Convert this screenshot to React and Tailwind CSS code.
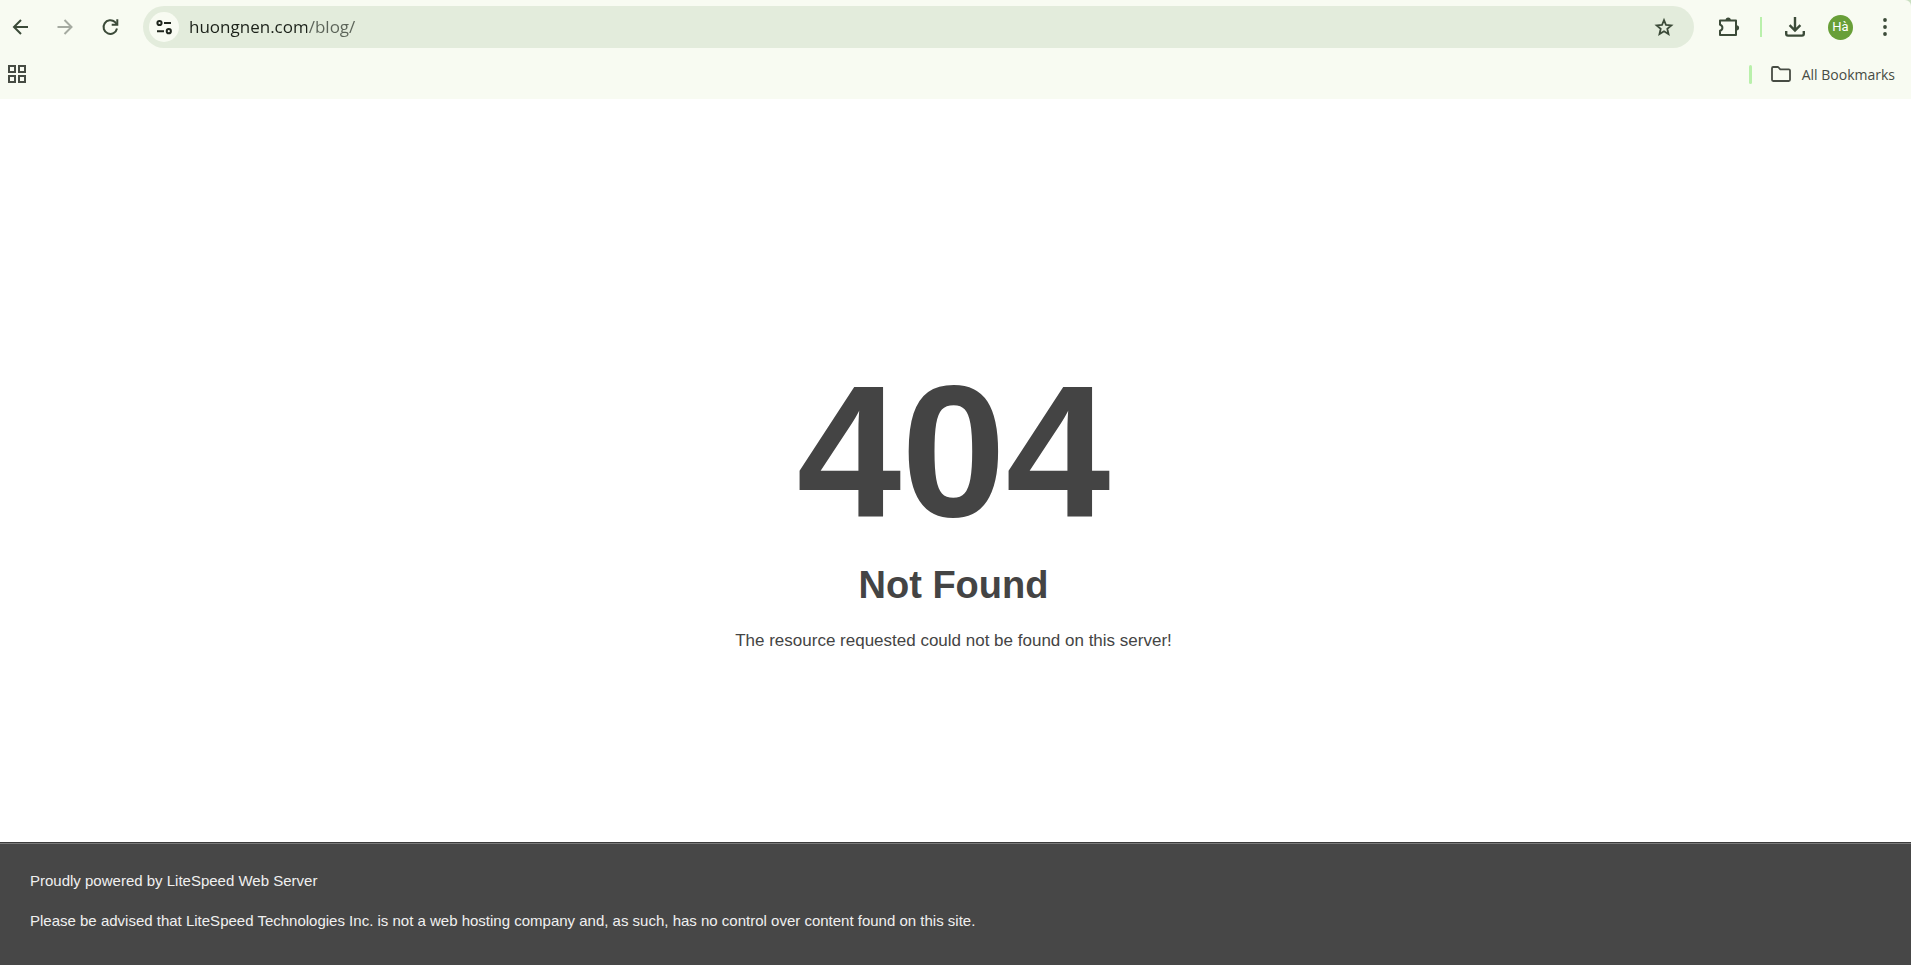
import React from "react";

const iconProps = {
  viewBox: "0 0 20 20",
  fill: "none",
  stroke: "currentColor",
  strokeWidth: 2,
  "aria-hidden": true,
};

const BackIcon = () => (
  <svg {...iconProps} className="size-5">
    <path d="M18 10H4M11 3l-7 7 7 7" />
  </svg>
);

const ForwardIcon = () => (
  <svg {...iconProps} className="size-5">
    <path d="M2.5 10h14M9.5 3l7 7-7 7" />
  </svg>
);

const ReloadIcon = () => (
  <svg {...iconProps} className="size-5">
    <path d="M17 11.5A6.8 6.8 0 1 1 15 5.1l2 2.2" />
    <path d="M17.3 2.2v5.6h-5.6" />
  </svg>
);

const SiteSettingsIcon = () => (
  <svg {...iconProps} className="size-5">
    <circle cx="5.5" cy="6" r="2.1" />
    <path d="M10 6h7M3 14.2h7" />
    <circle cx="14.8" cy="14.2" r="2.1" />
  </svg>
);

const StarIcon = () => (
  <svg {...iconProps} strokeWidth={1.8} className="size-5">
    <path d="M10 3.2l2 4.8 5.3.4-4 3.4 1.2 5.2-4.5-2.8L5.5 17l1.2-5.2-4-3.4L8 8z" />
  </svg>
);

const ExtensionsIcon = () => (
  <svg viewBox="0 0 22 22" fill="none" stroke="currentColor" strokeWidth={2} strokeLinejoin="round" className="size-[22px]" aria-hidden="true">
    <path d="M2 4.5h16V19H2v-4.2c3.2-.9 3.2-5.2 0-6.1z" />
    <path d="M7.6 4a2.6 2.6 0 0 1 5.2 0zM18.5 9.2a2.6 2.6 0 0 1 0 5.2z" fill="currentColor" stroke="none" />
  </svg>
);

const DownloadIcon = () => (
  <svg viewBox="0 0 22 22" fill="none" stroke="currentColor" strokeWidth={2.4} className="size-[22px]" aria-hidden="true">
    <path d="M11 1v13.5M5.6 9.2l5.4 5.4 5.4-5.4M2.2 15v2.8q0 1.8 1.8 1.8h14q1.8 0 1.8-1.8V15" />
  </svg>
);

const MenuIcon = () => (
  <svg viewBox="0 0 20 20" fill="currentColor" className="size-5" aria-hidden="true">
    <circle cx="10" cy="3" r="1.9" />
    <circle cx="10" cy="10" r="1.9" />
    <circle cx="10" cy="17" r="1.9" />
  </svg>
);

const AppsIcon = () => (
  <svg viewBox="0 0 18 18" fill="none" stroke="currentColor" strokeWidth={2} className="size-[18px]" aria-hidden="true">
    <path d="M1 1h6v6H1zM11 1h6v6h-6zM1 11h6v6H1zM11 11h6v6h-6z" />
  </svg>
);

const FolderIcon = () => (
  <svg viewBox="0 0 22 18" fill="none" stroke="currentColor" strokeWidth={1.8} strokeLinejoin="round" className="h-[18px] w-[22px]" aria-hidden="true">
    <path d="M2 3.2Q2 2 3.2 2h4.9l2.2 2.3h8.5q1.2 0 1.2 1.2v9.3q0 1.2-1.2 1.2H3.2Q2 16 2 14.8z" />
  </svg>
);

const Toolbar = () => (
  <div className="flex h-[54px] items-center pr-4 pl-[10px] text-[#3c4b39]">
    <div className="flex items-center gap-[25px]">
      <button aria-label="Back">
        <BackIcon />
      </button>
      <button aria-label="Forward" disabled className="text-[#a5aaa1]">
        <ForwardIcon />
      </button>
      <button aria-label="Reload">
        <ReloadIcon />
      </button>
    </div>

    <div className="ml-[23px] flex h-[42px] flex-1 items-center rounded-full bg-[#e3ecdc] pr-5 pl-[6px]">
      <button
        aria-label="View site information"
        className="flex size-[30px] items-center justify-center rounded-full bg-[#f8fbf2] text-[#20271e]"
      >
        <SiteSettingsIcon />
      </button>
      {/* domain is darker than the path that follows it */}
      <input
        type="text"
        aria-label="Address"
        defaultValue="huongnen.com/blog/"
        className="ml-[10px] flex-1 bg-linear-to-r from-[#1b2119] from-[118px] to-[#5c6459] to-[118px] bg-clip-text font-['Open_Sans',sans-serif] text-[17px] text-transparent outline-none"
      />
      <button aria-label="Bookmark this tab">
        <StarIcon />
      </button>
    </div>

    <div className="ml-6 flex items-center">
      <button aria-label="Extensions">
        <ExtensionsIcon />
      </button>
      <span className="ml-5 h-5 w-[2px] bg-[#b9f0ab]" />
      <button aria-label="Downloads" className="ml-[22px]">
        <DownloadIcon />
      </button>
      <button
        aria-label="Profile"
        className="ml-[22px] flex size-[25px] items-center justify-center rounded-full bg-[#689f38] font-[Roboto,sans-serif] text-[13px] text-white"
      >
        Hà
      </button>
      <button aria-label="Menu" className="ml-[22px]">
        <MenuIcon />
      </button>
    </div>
  </div>
);

const BookmarksBar = () => (
  <div className="flex h-[45px] items-start justify-between pr-4 pl-2 text-[#474c44]">
    <button aria-label="Apps" className="mt-[11px]">
      <AppsIcon />
    </button>
    <div className="mt-[10px] flex h-5 items-center">
      <span className="h-[19px] w-[3px] rounded-full bg-[#b9f0ab]" />
      <button className="ml-[18px] flex items-center gap-[10px] font-['Open_Sans',sans-serif] text-[14px]">
        <FolderIcon />
        All Bookmarks
      </button>
    </div>
  </div>
);

const App = () => {
  return (
    <div className="flex min-h-screen flex-col bg-white font-['Liberation_Sans',Arial,sans-serif]">
      <header className="bg-[#c9dfc0]">
        <div className="rounded-tr-md bg-[#f8fbf2]">
          <Toolbar />
          <BookmarksBar />
        </div>
      </header>

      <main className="flex flex-1 flex-col items-center pt-[258px] pr-1 text-center text-[#444]">
        <h1 className="text-[188px] leading-none font-bold">404</h1>
        <h2 className="mt-5 text-[38px] leading-10 font-bold">Not Found</h2>
        <p className="mt-6 text-[17px] leading-6">
          The resource requested could not be found on this server!
        </p>
      </main>

      <footer className="border-t border-[#3c3c3c] bg-[#474747] text-[15px] leading-5 text-[#f0f0f0]">
        <div className="border-t border-[#7a7a7a] px-[30px] pt-[27px] pb-[34px]">
          <p>Proudly powered by LiteSpeed Web Server</p>
          <p className="mt-5">
            Please be advised that LiteSpeed Technologies Inc. is not a web hosting company and, as
            such, has no control over content found on this site.
          </p>
        </div>
      </footer>
    </div>
  );
};

export default App;
